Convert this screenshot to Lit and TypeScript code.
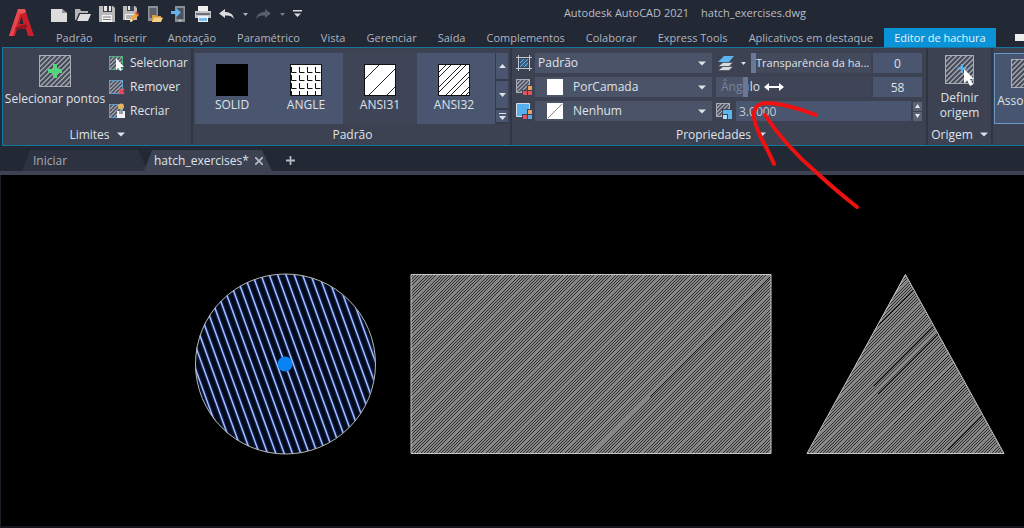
import { LitElement, html, svg, css } from "lit";
import { customElement, state } from "lit/decorators.js";
import { classMap } from "lit/directives/class-map.js";

const TABS = [
  "Padrão", "Inserir", "Anotação", "Paramétrico", "Vista", "Gerenciar", "Saída",
  "Complementos", "Colaborar", "Express Tools", "Aplicativos em destaque", "Editor de hachura",
];

/* Diagonal strokes (bottom-left to top-right) filling a w x h box. */
const diagonals = (w: number, h: number, step: number) => {
  let d = "";
  for (let x = step / 2; x < w + h; x += step) d += `M${x} 0L${x - h} ${h}`;
  return d;
};

const hatchBox = (x: number, y: number, s: number, cls: string) => svg`
  <svg x=${x} y=${y} width=${s} height=${s}><rect width=${s} height=${s} class="hb-bg"></rect>
    <path class=${cls} d=${diagonals(s, s, s > 20 ? 5 : 4)}></path>
    <rect x="0.5" y="0.5" width=${s - 1} height=${s - 1} class="hb-edge"></rect></svg>`;

const caret = html`<svg class="caret" width="8" height="5" viewBox="0 0 8 5"><path d="M0 0.5h8L4 4.5z" fill="#dfe2e8"/></svg>`;

const icons = {
  new: svg`<path d="M0 3h11l5 4v9H0z" fill="#dcdcdc"/><path d="M11 3v4h5z" fill="#8f949c"/>`,
  open: svg`<path d="M0 3h5l1 2h7v2H4L1 14H0z" fill="#b5b5b5"/><path d="M5 8h11l-3 7H2z" fill="#dedede"/>`,
  save: svg`<path d="M0 0h14l2 2v14H0z" fill="#b9b9b9"/><path d="M4 0h9v6H4z" fill="#3b404a"/><path d="M5 0h3v5H5zM10 0h2v5h-2z" fill="#e6e6e6"/><path d="M3 9h10v7H3z" fill="#f2f2f2"/><path d="M4 11h8M4 13.500h8" stroke="#777"/>`,
  saveas: svg`<path d="M0 0h12l2 2v12H0z" fill="#b9b9b9"/><path d="M4 0h7v5H4z" fill="#3b404a"/><path d="M5 0h2v4H5z" fill="#e6e6e6"/><path d="M2 8h10v6H2z" fill="#eee"/><path d="M3 10h7M3 12h5" stroke="#777"/><path d="M7 16l1-4 5-6 3 3-5 5z" fill="#f0a63c"/><path d="M12 7l1.500-1.500 2.500 2.500-1.500 1.500z" fill="#d6452f"/><path d="M7 16l1-3 2 2z" fill="#fff"/>`,
  webopen: svg`<path d="M1 0h10v15H1z" fill="#8c9198"/><path d="M2.500 2h7v10h-7z" fill="#5a606a"/><path d="M5 9h4l1 1h4v6H5z" fill="#d79a3c"/><path d="M7 11.500h9l-2 4.500H5z" fill="#f6cf86"/>`,
  websave: svg`<path d="M4 0h10v16H4z" fill="#8c9198"/><path d="M5.500 2h7v11h-7z" fill="#4c535f"/><path d="M8 14h2v1H8z" fill="#ddd"/><path d="M0 5h5V2l5 4.500L5 11V8H0z" fill="#67b5e8"/>`,
  print: svg`<path d="M3 0h10v5H3z" fill="#f0f0f0"/><path d="M0 5h16v7H0z" fill="#c4c6c9"/><path d="M1 7h14v2H1z" fill="#6b7078"/><path d="M3 10h10v6H3z" fill="#e7f2fb"/><path d="M4 12h8v3H4z" fill="#79bdf0"/>`,
  undo: svg`<path d="M0 6.500L6 2v3c5 0 8 2 9 7-2-3-5-4-9-3.500V11z" fill="#d9dbdf"/>`,
  redo: svg`<path d="M15 6.500L9 2v3c-5 0-8 2-9 7 2-3 5-4 9-3.500V11z" fill="#59606d"/>`,
};

const qat: [keyof typeof icons, string][] = [
  ["new", "Novo"], ["open", "Abrir"], ["save", "Salvar"], ["saveas", "Salvar como"],
  ["webopen", "Abrir da Web"], ["websave", "Salvar na Web"], ["print", "Plotar"],
];

const patterns = [
  { name: "SOLID", art: svg`<rect width="32" height="32" fill="#000"/>` },
  {
    name: "ANGLE",
    art: svg`<rect width="32" height="32" fill="#fff"/><path stroke="#111" fill="none" d="${[0, 1, 2, 3, 4]
      .flatMap((r) => [0, 1, 2, 3, 4].map((c) => `M${c * 8 - 6.5} ${r * 8 - 5}v5.500h5`)).join("")}"/><rect x=".5" y=".5" width="31" height="31" fill="none" stroke="#111"/>`,
  },
  {
    name: "ANSI31",
    art: svg`<rect width="32" height="32" fill="#fff"/><path stroke="#222" d="M16 0L0 16M32 4L4 32M32 22L22 32"/><rect x=".5" y=".5" width="31" height="31" fill="none" stroke="#111"/>`,
  },
  {
    name: "ANSI32",
    art: svg`<rect width="32" height="32" fill="#fff"/><path stroke="#222" d="M9 0L0 9M14 0L0 14M24 0L0 24M29 0L0 29M32 7L7 32M32 12L12 32M32 22L22 32M32 27L27 32"/><rect x=".5" y=".5" width="31" height="31" fill="none" stroke="#111"/>`,
  },
];

@customElement("cad-drawing")
export class CadDrawing extends LitElement {
  static styles = css`
    :host { display: block; }
    svg { display: block; width: 100%; height: 100%; }
    .edge { fill: none; stroke: #c9c9c9; }
    .fill { fill: #878787; }
    .dark { stroke: #2e2e2e; stroke-width: 1; fill: none; }
    .deep { stroke: #0c0c0c; stroke-width: 1; fill: none; }
    .light { stroke: #8c8c8c; stroke-width: 2; fill: none; }
    .base { fill: #030817; }
    .glow { stroke: #0d3080; stroke-width: 4; fill: none; opacity: 0.6; }
    .sel { stroke: #a9bdf2; stroke-width: 1.5; fill: none; }
    .circle { fill: none; stroke: #b9b9b0; }
    .grip { fill: #0a84f5; }
  `;

  /* Dense strokes, with a wider gap after every group. */
  private fine(x0: number, y0: number, w: number, h: number) {
    const groups = [5, 4, 5, 5, 4];
    let d = "";
    for (let x = x0, g = 0; x < x0 + w + h; g++) {
      for (let k = 0; k < groups[g % 5]; k++, x += 3) d += `M${x} ${y0}l${-h} ${h}`;
      x += 2;
    }
    return d;
  }

  private steep() {
    let d = "";
    for (let i = -18; i <= 18; i++) d += `M${285 + i * 8.3 - 38} 84l76 210`;
    return d;
  }

  render() {
    return html`<svg role="img" aria-label="Desenho hatch_exercises">
      <defs>
        <clipPath id="c"><circle cx="285" cy="189" r="90"/></clipPath>
        <clipPath id="r"><path d="M411 99h360v180H411z"/></clipPath>
        <clipPath id="t"><path d="M905 99l99 180H807z"/></clipPath>
      </defs>
      <g clip-path="url(#c)">
        <path class="base" d="M195 99h180v180H195z"/>
        <path class="glow" d=${this.steep()}/><path class="sel" d=${this.steep()}/>
      </g>
      <circle class="circle" cx="285.500" cy="189" r="90"/>
      <circle class="grip" cx="285" cy="189" r="7.500"/>
      <g clip-path="url(#r)">
        <path class="fill" d="M411 99h360v180H411z"/>
        <path class="dark" d=${this.fine(411, 99, 360, 180)}/>
        <path class="light" d="M769 99L589 279"/>
        <path class="deep" d="M771 101L650 222"/>
      </g>
      <path class="edge" d="M411 99.500h360v179H411z"/>
      <g clip-path="url(#t)">
        <path class="fill" d="M905 99l99 180H807z"/>
        <path class="dark" d=${this.fine(807, 99, 200, 180)}/>
        <path class="light" d="M936 156l-125 125M954 186l-93 93"/>
        <path class="deep" d="M914 115l-38 38M934 151l-60 60M938 159l-60 60M950 179l-60 60M954 189l-60 60M967 210l-50 50M983 240l-35 35"/>
      </g>
      <path class="edge" d="M905.500 99.500l98.500 179H807z"/>
    </svg>`;
  }
}

@customElement("app-root")
export class AppRoot extends LitElement {
  @state() private tab = TABS.length - 1;
  @state() private pattern = 2;
  @state() private transparency = 0;
  @state() private angle = 58;

  static styles = css`
    :host {
      display: flex; flex-direction: column; position: relative; min-height: 100vh; overflow: hidden;
      background: #222834; color: #dfe2e8; font: 12px/16px "Open Sans", "Noto Sans", sans-serif;
    }
    * { box-sizing: border-box; }
    button, select, input { font: inherit; color: inherit; margin: 0; padding: 0; border: 0; background: none; border-radius: 0; }
    button { display: flex; align-items: center; justify-content: center; white-space: nowrap; }
    svg { flex: none; display: block; }
    .caret { pointer-events: none; }
    .hb-bg { fill: #454b59; }
    .hb-line { stroke: #a4a8b0; stroke-width: 1.3; fill: none; }
    .hb-edge { fill: none; stroke: #a9adb5; }

    .header { display: grid; grid-template-columns: 46px minmax(0, 1fr); grid-template-rows: 28px 19px; }
    .logo { grid-row: 1 / 3; padding: 8px 0 0 8px; }
    .title-row { display: flex; align-items: center; }
    .qat { display: flex; align-items: center; gap: 8px; padding-left: 5px; }
    .doc { flex: 1; display: flex; justify-content: center; gap: 12px; color: #b9bdc6; padding-left: 44px; padding-bottom: 3px; white-space: nowrap; font-size: 11px; }
    .tabs { display: flex; gap: 1px; white-space: nowrap; }
    .tab { padding: 0 10px; color: #b0b5c0; font-size: 11px; }
    .tab.on { background: #0b93d8; color: #e6f4fc; }
    .mini { margin-left: auto; width: 9px; height: 7px; margin-top: 6px; background: #eee; }

    .ribbon { display: flex; height: 99px; border: solid #17769f; border-width: 1px 0 1px 1px; margin-left: 2px; background: #3c4252; overflow: hidden; white-space: nowrap; }
    .panel { display: flex; flex-direction: column; flex: none; border-right: 2px solid #2f3542; padding-top: 5px; }
    .body { display: flex; height: 71px; }
    .name { display: flex; align-items: center; justify-content: center; gap: 7px; flex: 1; }
    .limits { width: 190px; }
    .big { flex-direction: column; justify-content: flex-start; gap: 4px; }
    .limits .big { width: 104px; padding-top: 2px; gap: 4px; }
    .stack { display: flex; flex-direction: column; gap: 4px; }
    .small { height: 20px; gap: 4px; justify-content: flex-start; }
    .limits .stack { padding-left: 2px; }

    .pats { width: 319px; padding-left: 2px; }
    .gallery { width: 313px; background: #4a5670; }
    .pat { width: 74px; flex-direction: column; gap: 1px; }
    .pat.on { background: #3f4557; }
    .scroll { margin-left: auto; width: 13px; display: grid; grid-template-rows: 28px 29px 1fr; }
    .scroll button { border: 1px solid #353b4a; border-width: 0 0 2px 1px; }

    .props { width: 416px; padding-left: 4px; }
    .props .body { gap: 4px; }
    .row { display: flex; height: 20px; align-items: center; gap: 3px; }
    .combo { display: grid; grid-template-columns: 38px 1fr 14px; width: 177px; height: 20px; align-items: center; background: #4a5368; }
    .combo.plain { grid-template-columns: 3px 1fr 14px; }
    .combo select { grid-area: 1 / 2 / 2 / 4; height: 20px; appearance: none; outline: none; }
    .combo .caret { grid-area: 1 / 3; }
    .combo .swatch { grid-area: 1 / 1; margin-left: 12px; }
    .right { flex: 1; max-width: 206px; }
    .right .row { gap: 2px; }
    .layers { width: 33px; gap: 7px; justify-content: flex-start; padding-left: 2px; }
    .slider { position: relative; flex: 1; height: 20px; }
    .slider input { display: block; appearance: none; width: 100%; height: 20px; background: linear-gradient(#4a5368, #4a5368) 0 0 / var(--fill) 100% no-repeat #3f4557; }
    .slider.full input { background: #434a5c; }
    .slider.full label { font-size: 11px; }
    .slider input::-webkit-slider-thumb { appearance: none; width: 5px; height: 20px; background: #6a7796; }
    .slider label { position: absolute; inset: 2px auto auto 5px; pointer-events: none; }
    .dim { color: #78839c; }
    .under { color: #6a7796; }
    .num { width: 49px; height: 20px; background: #4a5670; text-align: center; }
    .scale { flex: 1; min-width: 0; height: 20px; background: #4a5670; padding-left: 3px; color: #c6cad3; }
    .spin { display: grid; gap: 1px; width: 9px; }
    .spin button { height: 9px; background: #596277; }
    .resize { position: absolute; left: 48px; top: 6px; pointer-events: none; }

    .origin { width: 65px; }
    .origin .body { justify-content: center; }
    .origin .big { line-height: 15px; white-space: normal; width: 52px; gap: 3px; }
    .assoc { border: 0; padding-left: 1px; }
    .assoc .big { width: 68px; border: 1px solid #6599c8; background: #475570; padding-top: 3px; gap: 4px; }

    .files { display: flex; height: 29px; padding: 4px 0 0 22px; border-bottom: 4px solid #3c4252; }
    .file { clip-path: polygon(8px 0, calc(100% - 10px) 0, 100% 100%, 0 100%); background: #2c3240; color: #a6abb6; height: 21px; gap: 6px; justify-content: flex-start; }
    .file.start { width: 126px; padding-left: 11px; }
    .file.on { background: #3c4252; color: #dfe2e8; width: 128px; margin-left: -4px; padding-left: 10px; }
    .plus { width: 24px; margin-left: 6px; }
    .canvas { flex: 1; display: flex; background: #000; border-left: 1px solid #1c2029; border-bottom: 2px solid #14171d; }
    cad-drawing { flex: 1; margin-left: -1px; }
    .ink { position: absolute; left: 740px; top: 90px; pointer-events: none; }
  `;

  private combo(id: string, label: string, text: string, icon: unknown, swatch?: unknown) {
    return html`<div class="row">
      <svg width="16" height="16" viewBox="0 0 16 16">${icon}</svg>
      <div class=${classMap({ combo: true, plain: !swatch })}>
        ${swatch ? html`<svg class="swatch" width="16" height="16">${swatch}</svg>` : ""}
        <select id=${id} aria-label=${label}><option>${text}</option></select>${caret}
      </div>
    </div>`;
  }

  render() {
    const pct = (v: number, max: number) => `--fill:${(v / max) * 100}%`;
    const squares = svg`<path d="M12 7h4v4h-4z" fill="#e9a05f"/><path d="M7 12h4v4H7z" fill="#e4525c"/><path d="M12 12h4v4h-4z" fill="#e4525c"/>`;
    const squaresBg = svg`<path d="M12 7h4v4h-4z" fill="#e9a05f"/><path d="M7 12h4v4H7z" fill="#e4525c"/><path d="M12 12h4v4h-4z" fill="#5aa9e6"/>`;
    return html`
      <header class="header">
        <div class="logo"><svg width="28" height="31" viewBox="0 0 28 31">
          <path d="M1 28L10 1h7l9 27h-6l-2-7H9l-2 7z" fill="#c5202b"/>
          <path d="M11.500 16h4L13.500 8z" fill="#222834"/>
          <path d="M10 1h4L5 28H1z" fill="#e5474c"/>
          <path d="M10 1h7l1 3-4 2-4-2z" fill="#ea5558"/>
          <path d="M7 20l11-4 1 4-11 2z" fill="#8f1620"/></svg></div>
        <div class="title-row">
          <div class="qat">
            ${qat.map(([k, t]) => html`<button aria-label=${t}><svg width="16" height="16" viewBox="0 0 16 16">${icons[k]}</svg></button>`)}
            <button aria-label="Desfazer"><svg width="16" height="14" viewBox="0 0 16 14">${icons.undo}</svg></button>
            <button aria-label="Lista desfazer"><svg width="5" height="3"><path d="M0 0h5L2.500 3z" fill="#aeb2ba"/></svg></button>
            <button aria-label="Refazer"><svg width="16" height="14" viewBox="0 0 16 14">${icons.redo}</svg></button>
            <button aria-label="Lista refazer"><svg width="5" height="3"><path d="M0 0h5L2.500 3z" fill="#7b808a"/></svg></button>
            <button aria-label="Personalizar"><svg width="9" height="8"><path d="M0 0h9v1.500H0zM1 3.500h7L4.500 7z" fill="#d9dbdf"/></svg></button>
          </div>
          <div class="doc"><span>Autodesk AutoCAD 2021</span><span>hatch_exercises.dwg</span></div>
        </div>
        <nav class="tabs">
          ${TABS.map((t, i) => html`<button class=${classMap({ tab: true, on: i === this.tab })} @click=${() => (this.tab = i)}>${t}</button>`)}
          <span class="mini"></span>
        </nav>
      </header>

      <section class="ribbon">
        <div class="panel limits">
          <div class="body">
            <button class="big"><svg width="32" height="32">${hatchBox(0, 0, 32, "hb-line")}<path d="M14 9h4v5h5v4h-5v5h-4v-5H9v-4h5z" fill="#52d67c"/></svg>Selecionar pontos</button>
            <div class="stack">
              <button class="small"><svg width="17" height="16">${hatchBox(0, 1, 14, "hb-line")}<path d="M.5 1.500h13v13H.5z" fill="none" stroke="#4cae78"/><path d="M7 3v12l2.500-2.500L11 16l2-1-1.500-3H15z" fill="#fff"/></svg>Selecionar</button>
              <button class="small"><svg width="17" height="16">${hatchBox(0, 1, 14, "hb-line")}<path d="M.5 1.500h13v13H.5z" fill="none" stroke="#5a9fd0"/><path d="M10 10l5 5M15 10l-5 5" stroke="#e2465a" stroke-width="2.200"/></svg>Remover</button>
              <button class="small"><svg width="17" height="16">${hatchBox(0, 1, 14, "hb-line")}<path d="M.5 1.500h13v13H.5z" fill="none" stroke="#5a9fd0"/><circle cx="12" cy="3.500" r="3" fill="#e8b25c"/><path d="M8 8h8v7H8z" fill="#f2f2f2"/><path d="M10 8h4v3h-4z" fill="#9aa0aa"/></svg>Recriar</button>
            </div>
          </div>
          <div class="name">Limites ${caret}</div>
        </div>

        <div class="panel pats">
          <div class="body gallery">
            ${patterns.map((p, i) => html`<button class=${classMap({ pat: true, on: i === this.pattern })} @click=${() => (this.pattern = i)}>
              <svg width="32" height="32">${p.art}</svg>${p.name}</button>`)}
            <div class="scroll">
              <button aria-label="Acima"><svg width="7" height="4"><path d="M0 4h7L3.500 0z" fill="#dfe2e8"/></svg></button>
              <button aria-label="Abaixo"><svg width="7" height="4"><path d="M0 0h7L3.500 4z" fill="#dfe2e8"/></svg></button>
              <button aria-label="Expandir"><svg width="7" height="7"><path d="M0 0h7v1H0zM0 3h7L3.500 7z" fill="#dfe2e8"/></svg></button>
            </div>
          </div>
          <div class="name">Padrão</div>
        </div>

        <div class="panel props">
          <div class="body">
            <div class="stack">
              ${this.combo("type", "Tipo de hachura", "Padrão", svg`<path d="M2.500 0v16M13.500 0v16M0 2.500h16M0 13.500h16" stroke="#c3c7ce"/><path d="M4 4h8v8H4z" fill="#3a5e80"/><path d="M8 4l-4 4M12 4l-8 8M12 8l-4 4" stroke="#63b2e6"/>`)}
              ${this.combo("color", "Cor da hachura", "PorCamada", svg`${hatchBox(0, 0, 14, "hb-line")}<path d="M11 6h5v10H6v-5h5z" fill="#3c4252"/>${squares}`, svg`<rect width="16" height="16" fill="#fff"/>`)}
              ${this.combo("bg", "Cor de fundo", "Nenhum", svg`<path d="M.5 .5h13v13H.5z" fill="#56b0ee" stroke="#d5dbe2"/><path d="M11 6h5v10H6v-5h5z" fill="#3c4252"/>${squaresBg}`, svg`<rect width="16" height="16" fill="#fff"/><path d="M1 15L15 1" stroke="#8b8474"/>`)}
            </div>
            <div class="stack right">
              <div class="row">
                <button class="layers" aria-label="Transparência da camada"><svg width="16" height="16" viewBox="0 0 16 16"><path d="M0 15.500l5-4h10l-4 4zM0 11.500l5-4h10l-4 4z" fill="#d8dade" stroke="#3c4252" stroke-width=".6"/><path d="M0 7l6-6h10l-5 6z" fill="#5bb4ec"/></svg><svg width="5" height="3"><path d="M0 0h5L2.500 3z" fill="#dfe2e8"/></svg></button>
                <div class="slider full"><input id="tr" type="range" min="0" max="90" .value=${String(this.transparency)} @input=${(e: any) => (this.transparency = +e.target.value)}><label for="tr">Transparência da ha...</label></div>
                <input class="num" aria-label="Transparência" .value=${String(this.transparency)}>
              </div>
              <div class="row">
                <div class="slider"><input id="an" type="range" min="0" max="320" style=${pct(this.angle, 320)} .value=${String(this.angle)} @input=${(e: any) => (this.angle = +e.target.value)}><label for="an"><span class="dim">Âng</span><span class="under">u</span>lo</label>
                  <svg class="resize" width="20" height="8"><path d="M0 4l5-4v3h10V0l5 4-5 4V5H5v3z" fill="#fff"/></svg></div>
                <input class="num" aria-label="Ângulo" .value=${String(this.angle)}>
              </div>
              <div class="row">
                <svg width="18" height="16">${hatchBox(0, 0, 14, "hb-line")}<path d="M6 6h11v10H6z" fill="#3c4252"/><path d="M7 7h9v9h-4v-5H7z" fill="#5bb4ec"/><path d="M7 12h4v4H7z" fill="#b5dcf5"/></svg>
                <input class="scale" aria-label="Escala" value="3.0000">
                <div class="spin"><button aria-label="Aumentar"><svg width="5" height="4"><path d="M0 4h5L2.500 0z" fill="#e6e8ec"/></svg></button><button aria-label="Diminuir"><svg width="5" height="4"><path d="M0 0h5L2.500 4z" fill="#e6e8ec"/></svg></button></div>
              </div>
            </div>
          </div>
          <div class="name">Propriedades ${caret}</div>
        </div>

        <div class="panel origin">
          <div class="body"><button class="big"><svg width="30" height="34">${hatchBox(0, 2, 29, "hb-line")}<path d="M17 11v9M12.500 15.500h9" stroke="#5bb4ec" stroke-width="2"/><path d="M19 16v14l3-3 3 6 3-1.500-3-5.500h4z" fill="#fff"/></svg>Definir origem</button></div>
          <div class="name">Origem ${caret}</div>
        </div>

        <div class="panel assoc">
          <div class="body"><button class="big"><svg width="35" height="32">${hatchBox(0, 2, 29, "hb-line")}</svg>Associativa</button></div>
        </div>
      </section>

      <nav class="files">
        <button class="file start">Iniciar</button>
        <button class="file on">hatch_exercises* <svg width="8" height="8"><path d="M0 0l8 8M8 0L0 8" stroke="#b4b8c0" stroke-width="1.800"/></svg></button>
        <button class="plus" aria-label="Novo desenho"><svg width="9" height="9"><path d="M4.500 0v9M0 4.500h9" stroke="#b4b8c0" stroke-width="1.800"/></svg></button>
      </nav>

      <main class="canvas"><cad-drawing></cad-drawing></main>

      <svg class="ink" width="125" height="125" viewBox="740 90 125 125" fill="none" stroke="#ee1111" stroke-width="4" stroke-linecap="round" stroke-linejoin="round">
        <path d="M816 115C800 109 779 103 767 103C757 103 753 109 754 118C756 133 768 148 774 164"/>
        <path d="M765 115C778 135 796 155 817 173C831 186 843 196 857 207"/>
      </svg>`;
  }
}
